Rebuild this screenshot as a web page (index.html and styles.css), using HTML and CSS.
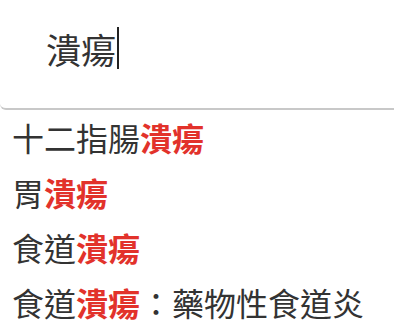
FILE: index.html
```html
<!DOCTYPE html>
<html lang="zh-Hant">
<head>
<meta charset="utf-8">
<link rel="stylesheet" href="styles.css">
</head>
<body>
<div class="search">
  <div class="query"><span class="qtext">潰瘍</span><span class="caret"></span></div>
</div>
<ul class="results">
  <li>十二指腸<b>潰瘍</b></li>
  <li>胃<b>潰瘍</b></li>
  <li>食道<b>潰瘍</b></li>
  <li>食道<b>潰瘍</b>：藥物性食道炎</li>
</ul>
</body>
</html>
```
FILE: styles.css
```css
html, body {
  margin: 0;
  padding: 0;
  background: #fff;
}
body {
  font-family: "Noto Sans CJK TC", "Noto Sans", sans-serif;
  color: #333;
  width: 394px;
  height: 328px;
  overflow: hidden;
}
.search {
  height: 110px;
  box-sizing: border-box;
  border-bottom: 2px solid #c8c8c8;
  border-bottom-left-radius: 6px;
  background: #fff;
  padding-left: 46px;
  padding-top: 20px;
}
.query {
  display: flex;
  align-items: center;
  height: 56px;
  font-size: 35px;
  color: #333;
}
.caret {
  display: inline-block;
  width: 2px;
  height: 42px;
  background: #222;
  margin-left: 1px;
}
.results {
  list-style: none;
  margin: 0;
  padding: 0 0 0 12px;
  font-size: 32px;
  line-height: 55px;
  color: #333;
}
.results b {
  color: #e2322b;
  font-weight: 700;
}
```
